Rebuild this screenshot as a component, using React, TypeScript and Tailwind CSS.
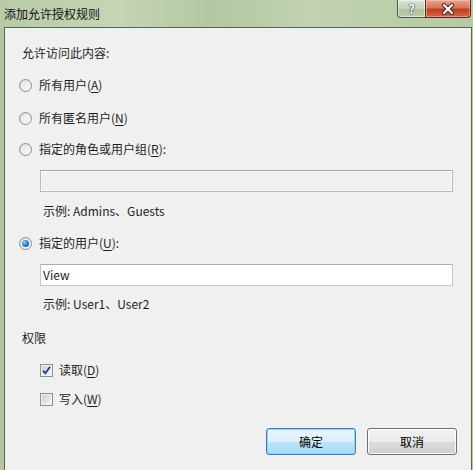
import React from 'react'

const FONT = "font-['Microsoft_YaHei','Noto_Sans_CJK_SC',sans-serif]"

function Radio({ checked }: { checked?: boolean }) {
  return (
    <span className="flex h-[13px] w-[13px] shrink-0 items-center justify-center rounded-full border border-[#8e8f8f] bg-gradient-to-br from-[#d2d4d6] to-[#fbfbfb]">
      <span className="flex h-[9px] w-[9px] items-center justify-center rounded-full bg-gradient-to-br from-[#e6e6e6] to-[#f8f8f8]">
        {checked && (
          <span className="h-[7px] w-[7px] rounded-full bg-[radial-gradient(circle_at_35%_35%,#8fd0ff,#1a6fc4_60%,#0d3f86)]" />
        )}
      </span>
    </span>
  )
}

function Check({ checked }: { checked?: boolean }) {
  return (
    <span className="flex h-[13px] w-[13px] shrink-0 items-center justify-center border border-[#8e8f8f] bg-[#f4f4f4]">
      <span className="relative h-[9px] w-[9px] bg-gradient-to-br from-[#cbcfd5] to-[#f6f6f6]">
        {checked && (
          <svg viewBox="0 0 9 9" className="absolute inset-0 h-[9px] w-[9px]">
            <path d="M1.2 4.6 L3.4 7.3 L8 0.8" fill="none" stroke="#1f3a8a" strokeWidth="1.7" />
          </svg>
        )}
      </span>
    </span>
  )
}

function U({ c }: { c: string }) {
  return <span className="underline underline-offset-2">{c}</span>
}

function Btn({ label, primary }: { label: string; primary?: boolean }) {
  return (
    <button
      className={
        'flex h-[27px] w-[90px] items-center justify-center rounded-[3px] border text-[12px] text-black ' +
        (primary
          ? 'border-[#3c7fb1] bg-[linear-gradient(#eaf6fd_0%,#d9f0fc_50%,#bee6fd_51%,#a7d9f5_100%)] shadow-[inset_0_0_0_1px_#98d3f2]'
          : 'border-[#707070] bg-[linear-gradient(#f2f2f2_0%,#ebebeb_50%,#dddddd_51%,#cfcfcf_100%)] shadow-[inset_0_0_0_1px_#fcfcfc]')
      }
    >
      {label}
    </button>
  )
}

export default function App() {
  return (
    <div className={'flex h-[470px] w-[473px] flex-col overflow-hidden bg-[#b3c5a1] ' + FONT}>
      {/* title bar */}
      <div className="relative flex h-[27px] shrink-0 items-center bg-[linear-gradient(90deg,#b9caa7_0%,#c6d5b4_25%,#b4c6a2_45%,#c2d2b1_65%,#bccdaa_85%,#b6c8a4_100%)] pl-[4px]">
        <span className="text-[12px] leading-none text-[#111]">添加允许授权规则</span>
        <div className="absolute right-[2px] top-0 flex h-[18px]">
          <div className="flex w-[28px] items-center justify-center rounded-bl-[4px] border border-t-0 border-r-0 border-[#4b5a47] bg-[linear-gradient(#d9e2d0_0%,#c5d2ba_50%,#aebf9e_51%,#bccbab_100%)] shadow-[inset_0_0_0_1px_rgba(255,255,255,0.5)]">
            <span className="text-[13px] font-bold leading-none text-white [text-shadow:0_0_1px_#2c3440,0_0_1px_#2c3440,0_0_1px_#2c3440]">?</span>
          </div>
          <div className="flex w-[46px] items-center justify-center rounded-br-[4px] border border-t-0 border-[#5a2a20] bg-[linear-gradient(#e9a693_0%,#d8735a_45%,#c2401f_55%,#d5664a_100%)] shadow-[inset_0_0_0_1px_rgba(255,220,210,0.4)]">
            <svg viewBox="0 0 14 12" className="h-[12px] w-[14px]">
              <path d="M3 2 L11 10 M11 2 L3 10" stroke="#3b2420" strokeWidth="4" strokeLinecap="round" />
              <path d="M3 2 L11 10 M11 2 L3 10" stroke="#ffffff" strokeWidth="2.2" strokeLinecap="round" />
            </svg>
          </div>
        </div>
      </div>

      {/* client area */}
      <div className="ml-[4px] mr-[1px] flex flex-1 flex-col border-l border-r border-t border-[#56664f] bg-[#f0f0f0] pl-[14px] text-[12px] leading-[16px] text-[#1e1e1e]">
        <div className="ml-[3px] mt-[17px]">允许访问此内容:</div>

        <label className="mt-[16px] flex items-center gap-[7px]">
          <Radio />
          <span>
            所有用户(<U c="A" />)
          </span>
        </label>
        <label className="mt-[17px] flex items-center gap-[7px]">
          <Radio />
          <span>
            所有匿名用户(<U c="N" />)
          </span>
        </label>
        <label className="mt-[15px] flex items-center gap-[7px]">
          <Radio />
          <span>
            指定的角色或用户组(<U c="R" />):
          </span>
        </label>

        <div className="ml-[21px] mt-[13px] h-[22px] w-[413px] border border-[#b5b9bd] border-t-[#a3a7ab] bg-[#f0f0f0] shadow-[inset_0_0_0_1px_#fafafa]" />
        <div className="ml-[24px] mt-[11px]">示例: Admins、Guests</div>

        <label className="mt-[16px] flex items-center gap-[7px]">
          <Radio checked />
          <span>
            指定的用户(<U c="U" />):
          </span>
        </label>

        <div className="ml-[21px] mt-[13px] flex h-[22px] w-[413px] items-center border border-[#c5c8cc] border-t-[#abadb3] bg-white pl-[2px]">
          View
        </div>
        <div className="ml-[24px] mt-[10px]">示例: User1、User2</div>

        <div className="ml-[3px] mt-[18px]">权限</div>

        <label className="ml-[21px] mt-[16px] flex items-center gap-[6px]">
          <Check checked />
          <span>
            读取(<U c="D" />)
          </span>
        </label>
        <label className="ml-[21px] mt-[13px] flex items-center gap-[6px]">
          <Check />
          <span>
            写入(<U c="W" />)
          </span>
        </label>

        <div className="mr-[14px] mt-[21px] flex justify-end gap-[11px]">
          <Btn label="确定" primary />
          <Btn label="取消" />
        </div>
      </div>
    </div>
  )
}
